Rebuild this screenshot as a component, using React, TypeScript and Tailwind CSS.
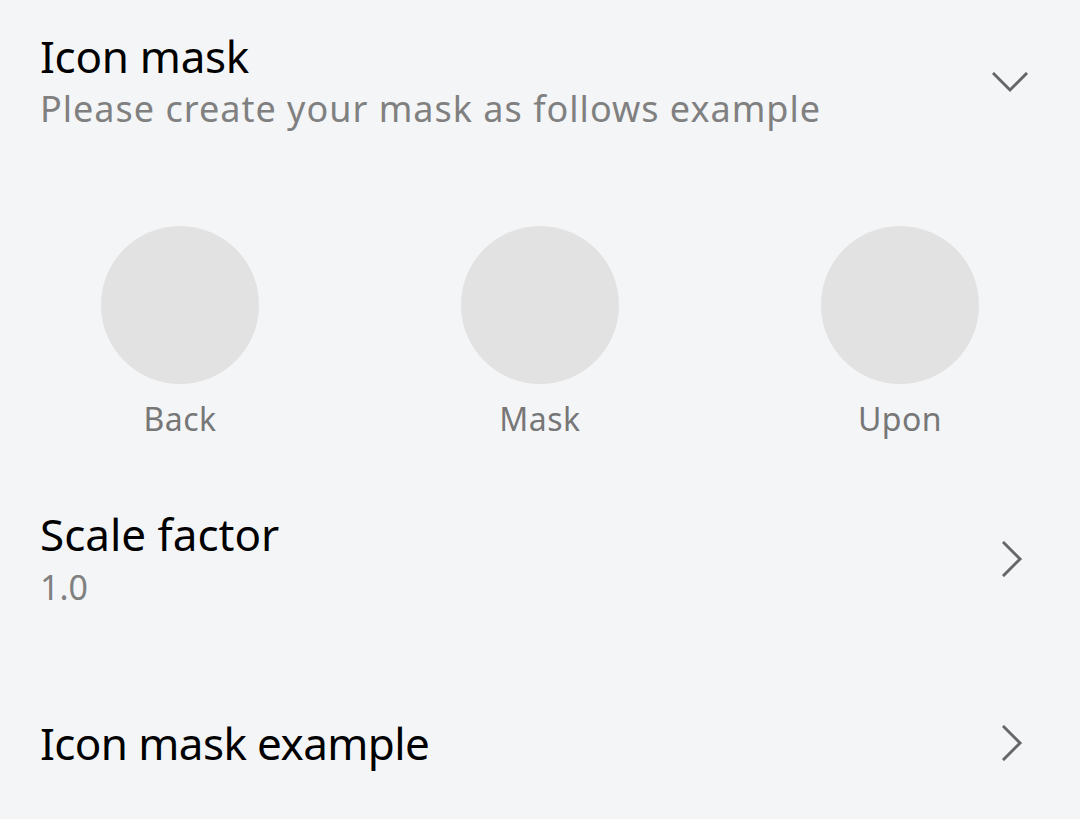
import React from 'react';

const ChevronDown = () => (
  <svg width="36" height="21" viewBox="0 0 36 21" fill="none" className="block">
    <polyline points="2,2 18,18 34,2" stroke="#666666" strokeWidth="3" strokeLinecap="square" />
  </svg>
);

const ChevronRight = () => (
  <svg width="21" height="36" viewBox="0 0 21 36" fill="none" className="block">
    <polyline points="2,2 18,18 2,34" stroke="#666666" strokeWidth="3" strokeLinecap="square" />
  </svg>
);

const layers = ['Back', 'Mask', 'Upon'];

export default function App() {
  return (
    <div
      className="w-[1080px] h-[819px] overflow-hidden bg-[#f4f5f7]"
      style={{ fontFamily: '"Noto Sans", "Open Sans", sans-serif' }}
    >
      {/* Icon mask header */}
      <div className="flex items-center justify-between pl-[40px] pr-[52px] pt-[28px]">
        <div className="flex flex-col">
          <span className="text-[44px] leading-[56px] tracking-[-0.3px] text-black">Icon mask</span>
          <span className="mt-[5px] text-[36px] leading-[40px] tracking-[1px] text-[#808080]">
            Please create your mask as follows example
          </span>
        </div>
        <div className="mb-[-8px]">
          <ChevronDown />
        </div>
      </div>

      {/* Layer preview */}
      <div className="mt-[97px] grid grid-cols-3">
        {layers.map((name) => (
          <div key={name} className="flex flex-col items-center">
            <div className="h-[158px] w-[158px] rounded-full bg-[#e2e2e2]" />
            <span className="mt-[15px] text-[32px] leading-[40px] tracking-[0.5px] text-[#777777]">{name}</span>
          </div>
        ))}
      </div>

      {/* Scale factor */}
      <div className="mt-[67px] flex items-center justify-between pl-[40px] pr-[57px]">
        <div className="flex flex-col">
          <span className="text-[44px] leading-[56px] text-black">Scale factor</span>
          <span className="mt-[5px] text-[34px] leading-[40px] text-[#808080]">1.0</span>
        </div>
        <div className="mt-[5px]">
          <ChevronRight />
        </div>
      </div>

      {/* Icon mask example */}
      <div className="mt-[108px] flex items-center justify-between pl-[40px] pr-[57px]">
        <span className="text-[44px] leading-[56px] tracking-[-0.6px] text-black">Icon mask example</span>
        <ChevronRight />
      </div>
    </div>
  );
}
